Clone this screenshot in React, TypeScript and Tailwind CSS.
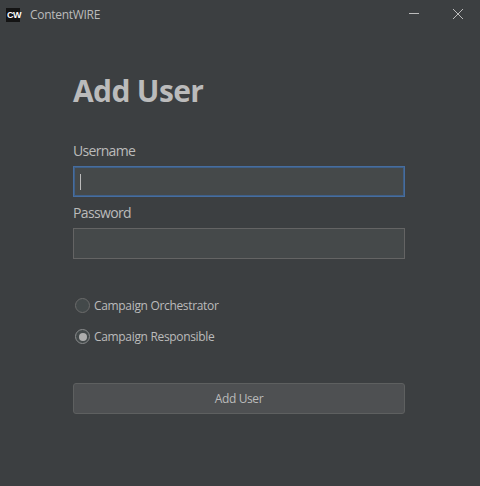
const roles = [
  { label: 'Campaign Orchestrator', selected: false },
  { label: 'Campaign Responsible', selected: true },
];

export default function App() {
  return (
    <div className="flex h-[486px] w-[480px] flex-col bg-[#3c3f41] font-['Open_Sans','Noto_Sans',sans-serif] text-[#bbbbbb]">
      <header className="flex h-[30px] items-center justify-between">
        <div className="flex items-center pl-[6px]">
          <div className="flex h-[14px] w-[14px] items-center justify-center bg-[#141414] pl-[2px] font-['Liberation_Sans',sans-serif] text-[9px] font-bold leading-[14px] tracking-[-0.4px] text-white">CW</div>
          <span className="ml-[10px] text-[12px] leading-[16px] tracking-[-0.3px]">ContentWIRE</span>
        </div>
        <svg width="90" height="30" viewBox="0 0 90 30" fill="none" stroke="#bbbbbb">
          <path d="M19 13.5H29" />
          <path d="M63 9L73 19M73 9L63 19" />
        </svg>
      </header>
      <form className="flex flex-col pl-[73px] pr-[75px] pt-[38px]">
        <h1 className="h-[45px] whitespace-nowrap text-[30px] font-bold leading-[45px] tracking-[-0.65px]">Add User</h1>
        <label className="mt-[28px] h-[20px] text-[14px] leading-[20px] tracking-[-0.7px]">Username</label>
        <div className="mt-[5px] flex h-[31px] items-center border border-[#466d9f] bg-[#45494a] pl-[6px] shadow-[inset_0_0_0_1px_#3f5f86]">
          <span className="h-[16px] w-px bg-[#bbbbbb]" />
        </div>
        <label className="mt-[6px] h-[20px] text-[14px] leading-[20px] tracking-[-0.65px]">Password</label>
        <div className="mt-[5px] h-[31px] border border-[#646464] bg-[#45494a]" />
        <div className="mt-[37px] flex flex-col gap-[11px] pl-[2px]">
          {roles.map((role) => (
            <label key={role.label} className="flex h-[20px] items-start pt-[2px]">
              <span className={`flex h-[15px] w-[15px] items-center justify-center rounded-full border bg-[#43494a] ${role.selected ? 'border-[#8a8c8d]' : 'border-[#6b6b6b]'}`}>
                {role.selected && <span className="h-[8px] w-[8px] rounded-full bg-[#adadad]" />}
              </span>
              <span className="ml-[4px] whitespace-nowrap text-[12px] leading-[16px] tracking-[-0.33px]">{role.label}</span>
            </label>
          ))}
        </div>
        <button type="button" className="mt-[36px] h-[31px] rounded-[3px] border border-[#5e6060] bg-[#4e5052] text-[12px] leading-[16px] tracking-[-0.4px]">Add User</button>
      </form>
    </div>
  );
}
